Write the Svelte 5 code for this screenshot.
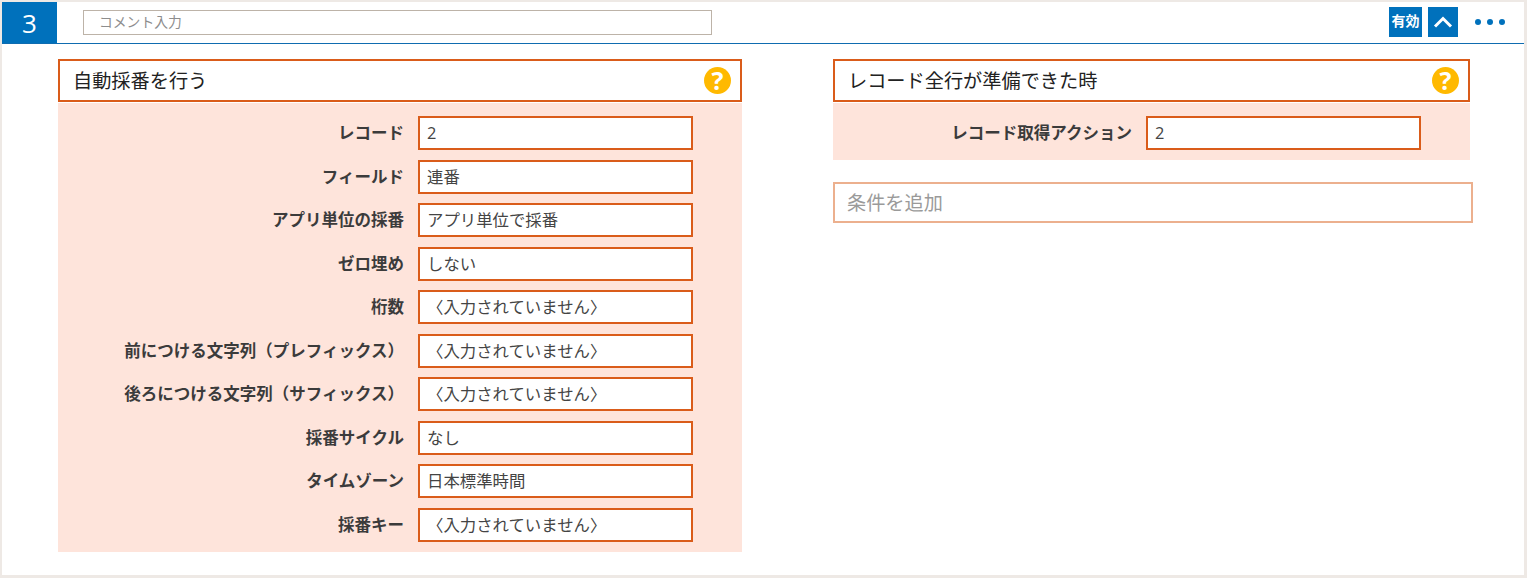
<script>
  const fields = [
    { label: "レコード", value: "2" },
    { label: "フィールド", value: "連番" },
    { label: "アプリ単位の採番", value: "アプリ単位で採番" },
    { label: "ゼロ埋め", value: "しない" },
    { label: "桁数", value: "〈入力されていません〉" },
    { label: "前につける文字列（プレフィックス）", value: "〈入力されていません〉" },
    { label: "後ろにつける文字列（サフィックス）", value: "〈入力されていません〉" },
    { label: "採番サイクル", value: "なし" },
    { label: "タイムゾーン", value: "日本標準時間" },
    { label: "採番キー", value: "〈入力されていません〉" }
  ];
</script>

<div class="page">
  <header class="bar">
    <div class="num">3</div>
    <div class="comment">コメント入力</div>
    <div class="tools">
      <span class="on">有効</span>
      <span class="fold">
        <svg width="20" height="12" viewBox="0 0 20 12"><path d="M2 10.5 L10 2.5 L18 10.5" fill="none" stroke="#fff" stroke-width="3"/></svg>
      </span>
      <span class="more"><i></i><i></i><i></i></span>
    </div>
  </header>

  <div class="columns">
    <section class="left">
      <div class="title">
        <span>自動採番を行う</span>
        <span class="help">?</span>
      </div>
      <div class="body">
        {#each fields as f}
          <div class="row">
            <div class="label">{f.label}</div>
            <div class="value">{f.value}</div>
          </div>
        {/each}
      </div>
    </section>

    <section class="right">
      <div class="title">
        <span>レコード全行が準備できた時</span>
        <span class="help">?</span>
      </div>
      <div class="body short">
        <div class="row">
          <div class="label">レコード取得アクション</div>
          <div class="value">2</div>
        </div>
      </div>
      <div class="add">条件を追加</div>
    </section>
  </div>
</div>

<style>
  :global(body) {
    margin: 0;
    background: #eee9e5;
  }

  .page {
    box-sizing: border-box;
    width: 1522px;
    height: 573px;
    margin: 2px 3px 3px 2px;
    background: #fff;
    color: #3b3b3b;
    font-family: "Open Sans", "Noto Sans CJK JP", sans-serif;
    overflow: hidden;
  }

  .bar {
    display: flex;
    align-items: center;
    height: 42px;
    box-sizing: border-box;
    border-bottom: 1px solid #0f6cb0;
  }

  .num {
    align-self: stretch;
    width: 55px;
    background: #0071bc;
    color: #fff;
    font-size: 26px;
    line-height: 42px;
    text-align: center;
  }

  .comment {
    box-sizing: border-box;
    width: 629px;
    height: 25px;
    margin-left: 26px;
    padding-left: 15px;
    border: 1px solid #bdb3a8;
    color: #8d8d8d;
    font-size: 13.8px;
    line-height: 21px;
  }

  .tools {
    display: flex;
    align-items: center;
    margin-left: auto;
    margin-bottom: 3px;
    margin-top: 2px;
  }

  .on {
    width: 33px;
    height: 30px;
    background: #0071bc;
    color: #fff;
    font-size: 14px;
    font-weight: 700;
    line-height: 27px;
    text-align: center;
  }

  .fold {
    display: flex;
    align-items: center;
    justify-content: center;
    width: 30px;
    height: 30px;
    margin-left: 6px;
    background: #0071bc;
  }

  .more {
    display: flex;
    gap: 6px;
    width: 30px;
    margin-left: 17px;
    margin-right: 19px;
  }

  .more i {
    width: 6px;
    height: 6px;
    border-radius: 50%;
    background: #0071bc;
  }

  .columns {
    display: flex;
    align-items: flex-start;
    padding: 15px 0 0 56px;
  }

  .left {
    width: 684px;
  }

  .right {
    width: 640px;
    margin-left: 91px;
  }

  .title {
    display: flex;
    align-items: center;
    justify-content: space-between;
    box-sizing: border-box;
    height: 43px;
    padding: 0 9px 0 13px;
    border: 2px solid #da5c1a;
    color: #222;
    font-size: 19.2px;
    line-height: 38px;
  }

  .right .title,
  .right .body {
    width: 637px;
  }

  .help {
    width: 27px;
    height: 27px;
    border-radius: 50%;
    background: #ffb900;
    color: #fff;
    font-size: 25px;
    font-weight: 700;
    line-height: 27px;
    text-align: center;
  }

  .body {
    display: flex;
    flex-direction: column;
    gap: 9.5px;
    margin-top: 1px;
    padding: 13px 0 10px;
    background: #fee4db;
  }

  .row {
    display: flex;
    align-items: center;
    justify-content: flex-end;
    gap: 14px;
    padding-right: 49px;
  }

  .label {
    font-size: 16.5px;
    font-weight: 700;
    line-height: 30px;
    color: #3b3b3b;
  }

  .value {
    box-sizing: border-box;
    width: 275px;
    height: 34px;
    padding-left: 7px;
    border: 2px solid #da5c1a;
    background: #fff;
    font-size: 16.4px;
    line-height: 30px;
    color: #444;
  }

  .add {
    box-sizing: border-box;
    height: 41px;
    margin-top: 22px;
    padding-left: 12px;
    border: 2px solid #ecb08e;
    color: #9a9a9a;
    font-size: 19.2px;
    line-height: 38px;
  }
</style>
